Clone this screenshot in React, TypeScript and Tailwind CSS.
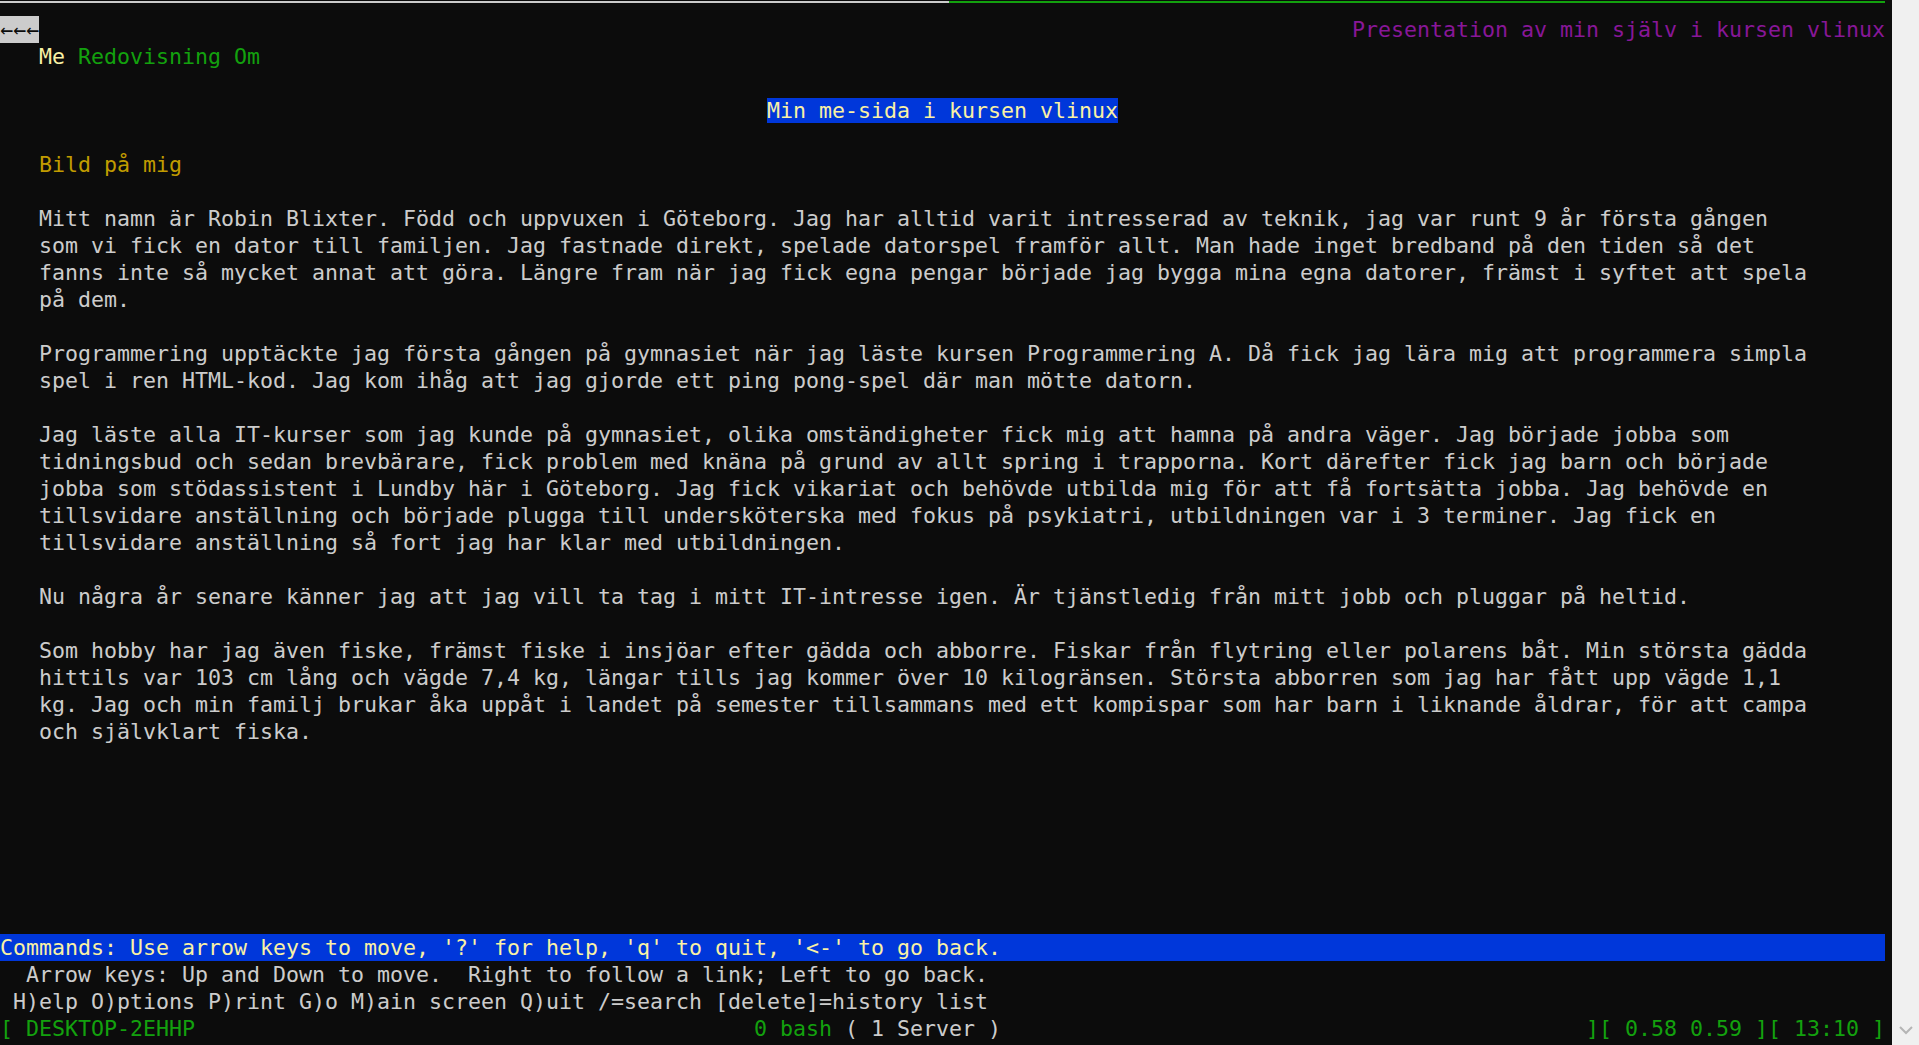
import React from 'react';

const body: string[] = [
  'Mitt namn är Robin Blixter. Född och uppvuxen i Göteborg. Jag har alltid varit intresserad av teknik, jag var runt 9 år första gången',
  'som vi fick en dator till familjen. Jag fastnade direkt, spelade datorspel framför allt. Man hade inget bredband på den tiden så det',
  'fanns inte så mycket annat att göra. Längre fram när jag fick egna pengar började jag bygga mina egna datorer, främst i syftet att spela',
  'på dem.',
  '',
  'Programmering upptäckte jag första gången på gymnasiet när jag läste kursen Programmering A. Då fick jag lära mig att programmera simpla',
  'spel i ren HTML-kod. Jag kom ihåg att jag gjorde ett ping pong-spel där man mötte datorn.',
  '',
  'Jag läste alla IT-kurser som jag kunde på gymnasiet, olika omständigheter fick mig att hamna på andra väger. Jag började jobba som',
  'tidningsbud och sedan brevbärare, fick problem med knäna på grund av allt spring i trapporna. Kort därefter fick jag barn och började',
  'jobba som stödassistent i Lundby här i Göteborg. Jag fick vikariat och behövde utbilda mig för att få fortsätta jobba. Jag behövde en',
  'tillsvidare anställning och började plugga till undersköterska med fokus på psykiatri, utbildningen var i 3 terminer. Jag fick en',
  'tillsvidare anställning så fort jag har klar med utbildningen.',
  '',
  'Nu några år senare känner jag att jag vill ta tag i mitt IT-intresse igen. Är tjänstledig från mitt jobb och pluggar på heltid.',
  '',
  'Som hobby har jag även fiske, främst fiske i insjöar efter gädda och abborre. Fiskar från flytring eller polarens båt. Min största gädda',
  'hittils var 103 cm lång och vägde 7,4 kg, längar tills jag kommer över 10 kilogränsen. Största abborren som jag har fått upp vägde 1,1',
  'kg. Jag och min familj brukar åka uppåt i landet på semester tillsammans med ett kompispar som har barn i liknande åldrar, för att campa',
  'och självklart fiska.',
];

const Row = ({ children, className = '' }: { children?: React.ReactNode; className?: string }) => (
  <div className={`h-[27px] leading-[27px] whitespace-pre ${className}`}>{children}</div>
);

const App = () => {
  return (
    <div className="w-[1919px] h-[1045px] bg-[#0c0c0c] flex overflow-hidden font-['DejaVu_Sans_Mono','Liberation_Mono',monospace] text-[21.6px] text-[#cccccc]">
      <div className="w-[1892px] flex flex-col">
        {/* pane border */}
        <div className="h-[16px] pt-[1px]">
          <div className="flex h-[2px]">
            <div className="w-[949px] bg-[#cccccc]" />
            <div className="w-[936px] bg-[#13a10e]" />
          </div>
        </div>

        <div className="w-[1885px] flex flex-col">
          <Row className="flex justify-between">
            <span className="bg-[#cccccc] text-[#0c0c0c]">←←←</span>
            <span className="text-[#881798]">Presentation av min själv i kursen vlinux</span>
          </Row>
          <Row className="pl-[39px]">
            <span className="text-[#f9f1a5]">Me</span>
            <span className="text-[#13a10e]"> Redovisning Om</span>
          </Row>
          <Row />
          <Row className="pl-[767px]">
            <span className="bg-[#0037da] text-[#f9f1a5]">Min me-sida i kursen vlinux</span>
          </Row>
          <Row />
          <Row className="pl-[39px] text-[#c19c00]">Bild på mig</Row>
          <Row />
          {body.map((line, i) => (
            <Row key={i} className="pl-[39px]">
              {line}
            </Row>
          ))}
          {[0, 1, 2, 3, 4, 5, 6].map((i) => (
            <Row key={'e' + i} />
          ))}

          <Row className="bg-[#0037da] text-[#f9f1a5]">
            Commands: Use arrow keys to move, '?' for help, 'q' to quit, '&lt;-' to go back.
          </Row>
          <Row>{'  Arrow keys: Up and Down to move.  Right to follow a link; Left to go back.'}</Row>
          <Row>{' H)elp O)ptions P)rint G)o M)ain screen Q)uit /=search [delete]=history list'}</Row>
          <Row className="flex">
            <span className="w-[754px] text-[#13a10e]">[ DESKTOP-2EHHP</span>
            <span className="text-[#13a10e]">0 bash</span>
            <span> ( 1 Server )</span>
            <span className="ml-auto text-[#13a10e]">][ 0.58 0.59 ][ 13:10 ]</span>
          </Row>
        </div>
      </div>

      {/* scrollbar */}
      <div className="w-[27px] bg-[#f0f0f0] flex flex-col justify-end items-center pb-[8px]">
        <svg width="14" height="10" viewBox="0 0 14 10" className="mb-[2px]">
          <path d="M1 2 L7 8 L13 2" fill="none" stroke="#b5b5b5" strokeWidth="2" />
        </svg>
      </div>
    </div>
  );
};

export default App;
